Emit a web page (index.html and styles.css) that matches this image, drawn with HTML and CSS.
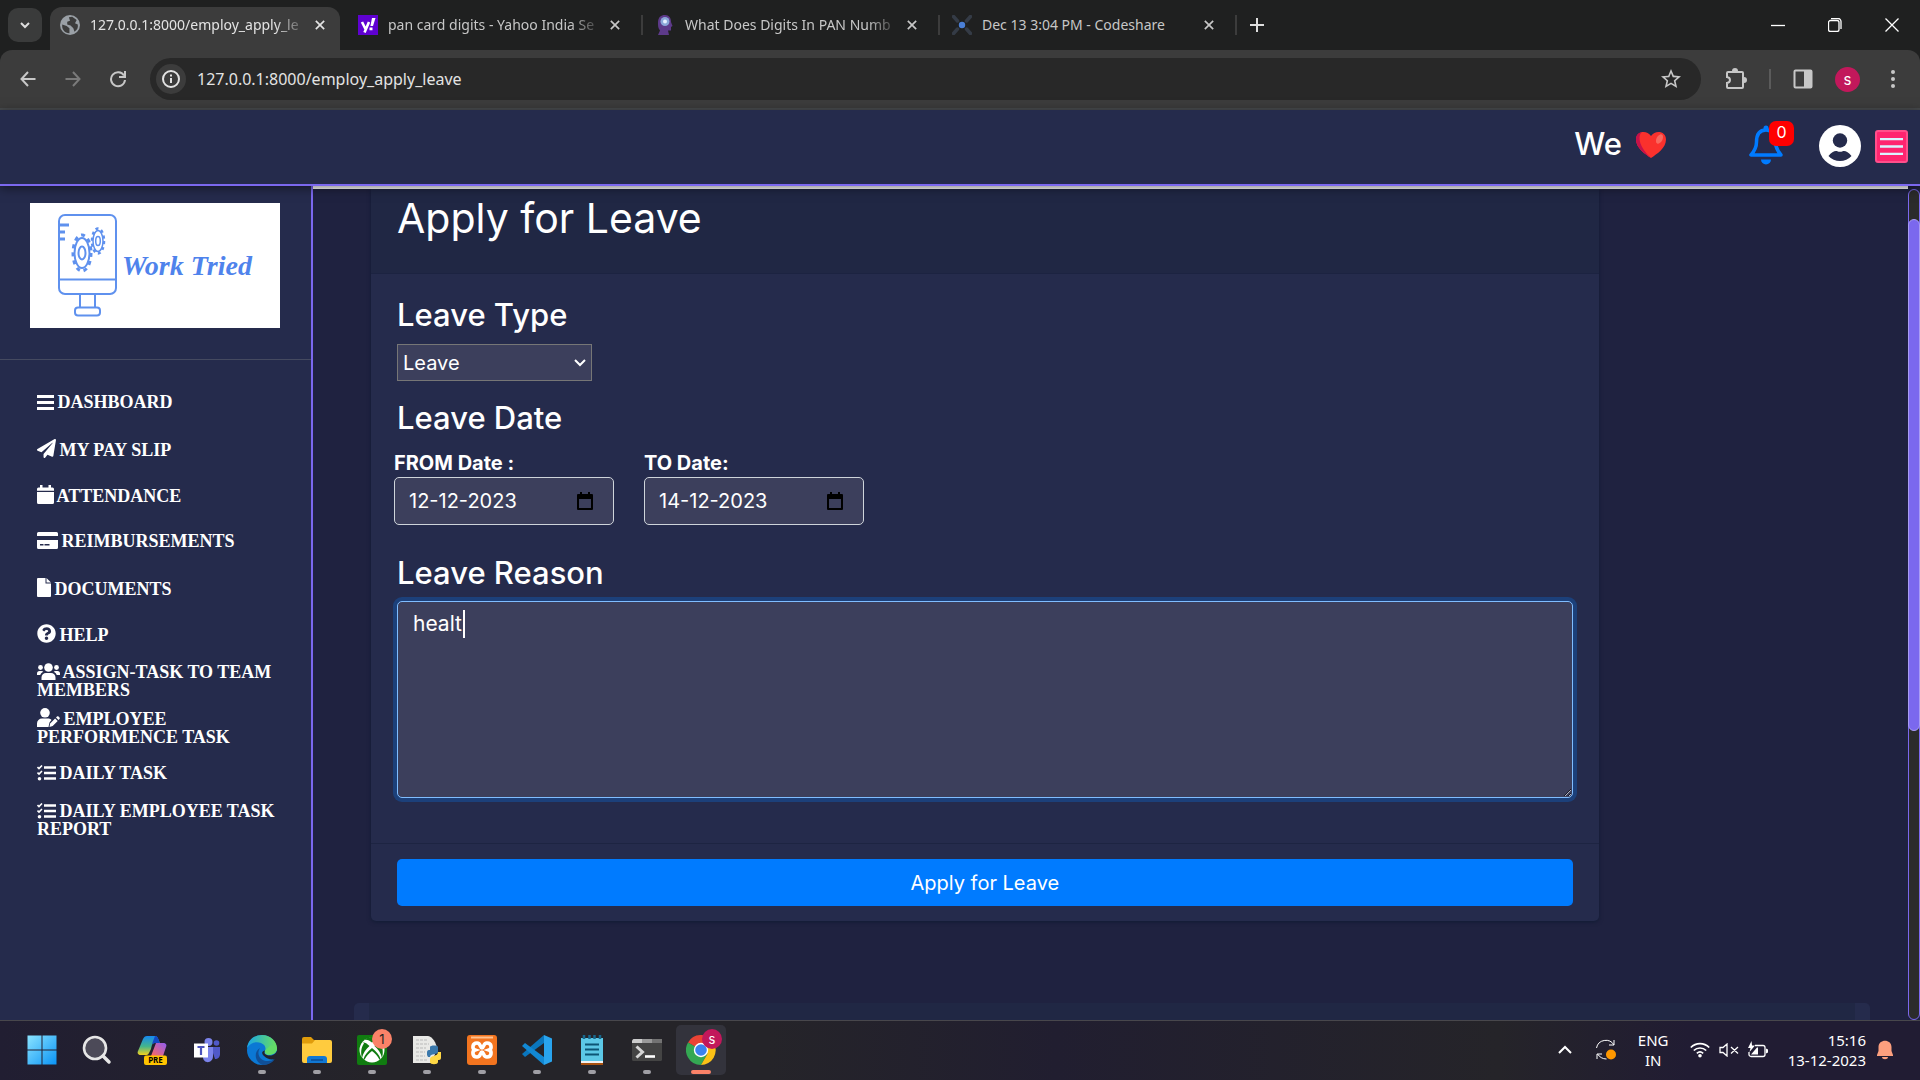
FILE: index.html
```html
<!DOCTYPE html>
<html lang="en">
<head>
<meta charset="utf-8">
<title>Apply for Leave</title>
<link rel="stylesheet" href="styles.css">
</head>
<body>
<header class="tabstrip">
  <button class="tab-search" aria-label="Search tabs"><svg width="12" height="8" viewBox="0 0 12 8"><path d="M2 2l4 4 4-4" class="line2"/></svg></button>
  <div class="tab tab-active">
    <svg class="favicon" viewBox="0 0 18 18"><circle cx="9" cy="9" r="9" fill="#9aa0a6"/><path d="M2 8.500l4 1.500 2.500 2v4.500C4 16 1.500 13 2 8.500zM8 2l3-.5 4 3-1.500 3 2.500 1c.5 3-.5 5-3 6.500l-1-3-2.500-2.500-3-1V6l2.500-.8z" fill="#3c3c3c"/></svg>
    <span class="tab-title tab-title-faded">127.0.0.1:8000/employ_apply_le</span>
    <button class="tab-close" aria-label="Close tab"><svg width="12" height="12" viewBox="0 0 12 12"><path d="M1 1l10 10M11 1L1 11" class="line2"/></svg></button>
  </div>
  <div class="tab">
    <svg class="favicon" viewBox="0 0 20 20"><path fill="#5f01d1" d="M0 0h20v20H0z"/><path d="M4 7l3.500 7M11 7l-4.500 10.500" stroke="#fff" stroke-width="2.600" fill="none"/><path d="M14 3h3.500l-2.500 8h-2.600zM11.500 12.500h3v2.800h-3z" fill="#fff"/></svg>
    <span class="tab-title tab-title-faded">pan card digits - Yahoo India Se</span>
    <button class="tab-close" aria-label="Close tab"><svg width="12" height="12" viewBox="0 0 12 12"><path d="M1 1l10 10M11 1L1 11" class="line2"/></svg></button>
  </div>
  <span class="tab-sep"></span>
  <div class="tab">
    <svg class="favicon" viewBox="0 0 20 20"><path d="M3 8C3 2 6 0 10 0s6 3 6 7l1.500 4-1.500 1v3.500h-3l1 4.500H3l2-4.500C3 13 3 11 3 8z" fill="#5d3a8a"/><circle cx="10" cy="6.500" r="4.500" fill="#8aa7d8"/><circle cx="10" cy="6.500" r="2" fill="#e5f0ff"/></svg>
    <span class="tab-title tab-title-faded">What Does Digits In PAN Numb</span>
    <button class="tab-close" aria-label="Close tab"><svg width="12" height="12" viewBox="0 0 12 12"><path d="M1 1l10 10M11 1L1 11" class="line2"/></svg></button>
  </div>
  <span class="tab-sep"></span>
  <div class="tab">
    <svg class="favicon" viewBox="0 0 20 20"><path d="M1.500 1.500l4 4.500M18.500 1.500l-4 4.500M1.500 18.500l4-4.500M18.500 18.500l-4-4.500" stroke="#343b46" stroke-width="3.500" stroke-linecap="round"/><circle cx="10" cy="10" r="3.200" fill="#4a7fd6"/></svg>
    <span class="tab-title">Dec 13 3:04 PM - Codeshare</span>
    <button class="tab-close" aria-label="Close tab"><svg width="12" height="12" viewBox="0 0 12 12"><path d="M1 1l10 10M11 1L1 11" class="line2"/></svg></button>
  </div>
  <span class="tab-sep"></span>
  <button class="tab-new" aria-label="New tab"><svg width="14" height="14" viewBox="0 0 14 14"><path d="M7 0v14M0 7h14" class="line2"/></svg></button>
  <div class="window-controls">
    <button aria-label="Minimize"><svg width="14" height="14" viewBox="0 0 14 14"><path d="M0 7.500h14" class="line1"/></svg></button>
    <button aria-label="Restore"><svg width="14" height="14" viewBox="0 0 14 14"><rect x=".5" y="2.500" width="10.500" height="11" rx="2" class="line1"/><path d="M3 .5h7a3 3 0 0 1 3 3V11" class="line1"/></svg></button>
    <button aria-label="Close"><svg width="14" height="14" viewBox="0 0 14 14"><path d="M.5.5l13 13M13.500.5l-13 13" class="line1"/></svg></button>
  </div>
</header>

<div class="toolbar-back">
<div class="toolbar">
  <button class="tool" aria-label="Back"><svg width="16" height="16" viewBox="0 0 16 16"><path d="M15.500 8H1.500M8 1L1.500 8 8 15" class="line2"/></svg></button>
  <button class="tool tool-dim" aria-label="Forward"><svg width="16" height="16" viewBox="0 0 16 16"><path d="M.5 8h14M8 1l6.500 7L8 15" class="line2"/></svg></button>
  <button class="tool" aria-label="Reload"><svg width="18" height="18" viewBox="0 0 18 18"><path d="M15 5.500A7 7 0 1 0 16 10M16 1v6h-6" class="line2"/></svg></button>
  <div class="omnibox">
    <span class="site-info"><svg width="18" height="18" viewBox="0 0 18 18"><circle cx="9" cy="9" r="8" class="line2"/><path d="M9 8v5M9 4.500v2" class="line2"/></svg></span>
    <input class="url" type="text" aria-label="Address" value="127.0.0.1:8000/employ_apply_leave">
    <button class="star" aria-label="Bookmark"><svg width="24" height="24" viewBox="0 0 24 24" fill="currentColor"><path d="M22 9.240l-7.190-.62L12 2 9.190 8.630 2 9.240l5.460 4.730L5.820 21 12 17.270 18.180 21l-1.630-7.030L22 9.240zM12 15.400l-3.760 2.270 1-4.280-3.320-2.880 4.380-.38L12 6.100l1.710 4.040 4.380.38-3.320 2.880 1 4.280L12 15.400z"/></svg></button>
  </div>
  <div class="tool-group">
    <button aria-label="Extensions"><svg width="22" height="22" viewBox="0 0 22 22"><path d="M3.500 4h13.500a1 1 0 0 1 1 1v14a1 1 0 0 1-1 1H3a1 1 0 0 1-1-1v-4c4-.5 4-5.500 0-6V5a1 1 0 0 1 1-1z" class="line2"/><path d="M7 3a3 3 0 0 1 6 0zM19 9a3 3 0 0 1 0 6z" fill="currentColor"/></svg></button>
    <span class="tool-sep"></span>
    <button aria-label="Side panel"><svg width="20" height="20" viewBox="0 0 20 20"><rect x="1.500" y="1.500" width="17" height="17" rx="1" class="line2"/><path d="M11 1h8v18h-8z" fill="currentColor"/></svg></button>
    <button class="profile" aria-label="Profile">s</button>
    <button aria-label="Menu"><svg width="6" height="20" viewBox="0 0 6 20" fill="currentColor"><circle cx="3" cy="3" r="2"/><circle cx="3" cy="10" r="2"/><circle cx="3" cy="17" r="2"/></svg></button>
  </div>
</div>
</div>

<div class="page">
  <header class="app-header">
    <span class="we">We</span>
    <svg class="heart" width="30" height="28" viewBox="0 0 30 28"><path d="M15 27C9 23 0 17 0 8.500 0 3.500 3.500 1 7.500 1c3 0 5.500 1.300 7.500 4 2-2.700 4.500-4 7.500-4C26.500 1 30 3.500 30 8.500 30 17 21 23 15 27z" fill="#fa312d"/><path d="M15 27C9 23 0 17 0 8.500 0 4 2.500 1.500 5.500 1.200 1 6 4 17 15 27z" fill="#c5114a"/><ellipse cx="23.500" cy="8" rx="3" ry="5" transform="rotate(28 23.500 8)" fill="#f8685f"/></svg>
    <a class="notify" href="#" aria-label="Notifications">
      <svg width="34" height="40" viewBox="0 0 34 40"><path d="M17 5C9 5 7.500 12 7.500 17c0 6-2 9-5.500 13h30c-3.500-4-5.500-7-5.500-13 0-5-1.500-12-9.500-12z" fill="none" stroke="#007bff" stroke-width="3.500" stroke-linejoin="round"/><path d="M14.500 5V3a2.500 2.500 0 0 1 5 0v2zM12 34.500h10a5 5 0 0 1-10 0z" fill="#007bff"/></svg>
      <span class="badge">0</span>
    </a>
    <svg class="avatar" width="42" height="42" viewBox="0 0 42 42"><circle cx="21" cy="21" r="21" fill="#fff"/><circle cx="21" cy="15.500" r="7.200" fill="#252b4c"/><path d="M9.500 31C12 27.500 15 26 17 26c1.500 0 2 .8 4 .8s2.500-.8 4-.8c2 0 5 1.500 7.500 5a15.500 15.500 0 0 1-23 0z" fill="#252b4c"/></svg>
    <button class="burger" aria-label="Toggle menu"><svg width="23" height="17" viewBox="0 0 23 17"><path d="M0 1h23M0 8.500h23M0 16h23" stroke="#d9f3ff" stroke-width="2.400"/></svg></button>
  </header>

  <div class="columns">
    <aside class="sidebar">
      <div class="logo">
        <svg width="60" height="106" viewBox="0 0 60 106" fill="none" stroke="#5f91ee" stroke-width="2">
          <rect x="1" y="2" width="57" height="79" rx="6"/><path d="M1 66.500h57M22 82v12M37 82v12"/><rect x="17" y="94.500" width="25" height="8" rx="3"/><path d="M2 12h9M2 19h5M2 26h5" stroke-width="3"/>
          <ellipse cx="24" cy="40" rx="9" ry="18" stroke-width="3" stroke-dasharray="4 4"/><ellipse cx="24" cy="40" rx="7.500" ry="15" fill="#fff"/><ellipse cx="24" cy="40" rx="3.500" ry="6.500"/>
          <ellipse cx="40" cy="28" rx="6" ry="12.500" stroke-width="2.500" stroke-dasharray="3 3"/><ellipse cx="40" cy="28" rx="5" ry="10.500" fill="#fff" stroke-width="1.500"/><ellipse cx="40" cy="28" rx="2.300" ry="4.500" stroke-width="1.500"/>
        </svg>
        <span class="logo-text">Work Tried</span>
      </div>
      <nav class="menu">
        <a href="#"><span><svg width="17" height="15" viewBox="0 0 17 15"><path d="M0 1.500h17M0 7.500h17M0 13.500h17" stroke="#fff" stroke-width="3"/></svg> DASHBOARD</span></a>
        <a href="#"><span><svg width="19" height="19" viewBox="0 0 512 512"><path d="M476 3.200L12.500 270.600c-18.100 10.400-15.800 35.600 2.200 43.200L121 358.400l287.300-253.200c5.500-4.900 13.300 2.600 8.600 8.300L176 407v80.500c0 23.600 28.500 32.900 42.500 15.800L282 426l124.600 52.200c14.200 6 30.400-2.900 33-18.200l72-432C515 7.800 493.300-6.800 476 3.200z"/></svg> MY PAY SLIP</span></a>
        <a href="#"><span><svg width="17" height="19" viewBox="0 0 17 19"><path d="M0 7h17v10.500a1.500 1.500 0 0 1-1.500 1.500h-14A1.500 1.500 0 0 1 0 17.500zM0 5.800V4a1.500 1.500 0 0 1 1.500-1.500H3V0h2.500v2.500h6V0H14v2.500h1.500A1.500 1.500 0 0 1 17 4v1.800z"/></svg> ATTENDANCE</span></a>
        <a href="#"><span><svg width="21" height="17" viewBox="0 0 21 17"><path d="M0 4V1.500A1.500 1.500 0 0 1 1.500 0h18A1.500 1.500 0 0 1 21 1.500V4zM0 8h21v7.500a1.500 1.500 0 0 1-1.500 1.500h-18A1.500 1.500 0 0 1 0 15.500zm3 4v1.500h3.500V12zm4.500 0v1.500h5V12z" fill-rule="evenodd"/></svg> REIMBURSEMENTS</span></a>
        <a href="#"><span><svg width="14" height="19" viewBox="0 0 14 19"><path d="M0 1a1 1 0 0 1 1-1h7.500v5.500H14V18a1 1 0 0 1-1 1H1a1 1 0 0 1-1-1zM9.500 0L14 4.500H9.500z"/></svg> DOCUMENTS</span></a>
        <a href="#"><span><svg width="19" height="19" viewBox="0 0 512 512"><path d="M504 256c0 136.997-111.043 248-248 248S8 392.997 8 256C8 119.083 119.043 8 256 8s248 111.083 248 248zM262.655 90c-54.497 0-89.255 22.957-116.549 63.758-3.536 5.286-2.353 12.415 2.715 16.258l34.699 26.310c5.205 3.947 12.621 3.008 16.665-2.122 17.864-22.658 30.113-35.797 57.303-35.797 20.429 0 45.698 13.148 45.698 32.958 0 14.976-12.363 22.667-32.534 33.976C247.128 238.528 216 254.941 216 296v4c0 6.627 5.373 12 12 12h56c6.627 0 12-5.373 12-12v-1.333c0-28.462 83.186-29.647 83.186-106.667 0-58.002-60.165-102-116.531-102zM256 338c-25.365 0-46 20.635-46 46 0 25.364 20.635 46 46 46s46-20.636 46-46c0-25.365-20.635-46-46-46z"/></svg> HELP</span></a>
        <a href="#"><span><svg width="23" height="17" viewBox="0 0 23 17"><circle cx="11.500" cy="4.500" r="4.300"/><circle cx="3.500" cy="4.500" r="2.400"/><circle cx="19.500" cy="4.500" r="2.400"/><path d="M4.500 17v-2.500a4.500 4.500 0 0 1 4.500-4.500h5a4.500 4.500 0 0 1 4.500 4.500V17zM0 12v-1.500A2.500 2.500 0 0 1 2.500 8h2c.8 0 1.300.2 1.800.7C4.500 9.500 3.500 11 3.300 12zM23 12v-1.500A2.500 2.500 0 0 0 20.500 8h-2c-.8 0-1.300.2-1.800.7 1.800.8 2.800 2.300 3 3.300z"/></svg> ASSIGN-TASK TO TEAM MEMBERS</span></a>
        <a href="#"><span><svg width="23" height="19" viewBox="0 0 23 19"><circle cx="8" cy="4.800" r="4.800"/><path d="M0 19v-3.500A5 5 0 0 1 5 10.500h6c1.500 0 2.700.5 3.500 1.500l-2 2.500-1 4.500zM12.500 19l.6-3.500 5-5 2.600 2.600-5 5zM19 9.500l1-1c.5-.5 1-.5 1.500 0l1 1c.5.500.5 1 0 1.500l-1 1z"/></svg> EMPLOYEE PERFORMENCE TASK</span></a>
        <a href="#"><span><svg width="19" height="16" viewBox="0 0 19 16"><path d="M7 2.500h12M7 8h12M7 13.500h12" stroke="#fff" stroke-width="2.500"/><path d="M.5 2l1.500 1.500L5 .5M.5 7.500L2 9l3-3" stroke="#fff" stroke-width="1.600" fill="none"/><circle cx="2.500" cy="13.700" r="1.800"/></svg> DAILY TASK</span></a>
        <a href="#"><span><svg width="19" height="16" viewBox="0 0 19 16"><path d="M7 2.500h12M7 8h12M7 13.500h12" stroke="#fff" stroke-width="2.500"/><path d="M.5 2l1.500 1.500L5 .5M.5 7.500L2 9l3-3" stroke="#fff" stroke-width="1.600" fill="none"/><circle cx="2.500" cy="13.700" r="1.800"/></svg> DAILY EMPLOYEE TASK REPORT</span></a>
      </nav>
    </aside>

    <main class="content">
      <form class="card">
        <h1 class="card-head">Apply for Leave</h1>
        <div class="card-body">
          <label class="field-title" for="type">Leave Type</label>
          <div class="select-wrap">
            <select id="type"><option>Leave</option></select>
            <svg class="select-arrow" width="12" height="8" viewBox="0 0 12 8"><path d="M1 1l5 5 5-5" class="line2"/></svg>
          </div>
          <h2 class="field-title">Leave Date</h2>
          <div class="dates">
            <div class="date"><label for="from">FROM Date :</label>
              <div class="date-box"><input id="from" type="text" value="12-12-2023"><svg width="16" height="18" viewBox="0 0 16 18"><path d="M0 3a1 1 0 0 1 1-1h2V0h2v2h6V0h2v2h2a1 1 0 0 1 1 1v14a1 1 0 0 1-1 1H1a1 1 0 0 1-1-1zm2 4v9h12V7z" fill-rule="evenodd"/></svg></div></div>
            <div class="date"><label for="to">TO Date:</label>
              <div class="date-box"><input id="to" type="text" value="14-12-2023"><svg width="16" height="18" viewBox="0 0 16 18"><path d="M0 3a1 1 0 0 1 1-1h2V0h2v2h6V0h2v2h2a1 1 0 0 1 1 1v14a1 1 0 0 1-1 1H1a1 1 0 0 1-1-1zm2 4v9h12V7z" fill-rule="evenodd"/></svg></div></div>
          </div>
          <label class="field-title" for="reason">Leave Reason</label>
          <div class="reason-wrap"><textarea id="reason">healt</textarea><span class="caret"></span></div>
        </div>
        <div class="card-foot"><button class="submit" type="submit">Apply for Leave</button></div>
      </form>
      <section class="history"><div class="history-head"></div></section>
    </main>
    <div class="scrollbar"><div class="thumb"></div></div>
  </div>
</div>

<footer class="taskbar">
  <div class="apps">
    <button class="app" aria-label="Start"><svg width="30" height="30" viewBox="0 0 30 30"><defs><linearGradient id="win" x2="1" y2="1"><stop stop-color="#8be4ff"/><stop offset="1" stop-color="#0a93f5"/></linearGradient></defs><path d="M.5.500h14v14h-14zM15.500.5h14v14h-14zM.5 15.500h14v14h-14zM15.500 15.500h14v14h-14z" fill="url(#win)"/></svg></button>
    <button class="app" aria-label="Search"><svg width="30" height="30" viewBox="0 0 30 30"><circle cx="13" cy="13" r="11" fill="#4c4a58" stroke="#e6e6e6" stroke-width="2.600"/><path d="M21 21l6 6" stroke="#e6e6e6" stroke-width="3.500" stroke-linecap="round"/></svg></button>
    <button class="app" aria-label="Copilot"><svg width="30" height="30" viewBox="0 0 30 30"><defs><linearGradient id="cop" x2="0" y2="1"><stop stop-color="#1689f0"/><stop offset=".55" stop-color="#44b58b"/><stop offset="1" stop-color="#f5d11d"/></linearGradient><linearGradient id="cop2" x1="1" x2="0" y2="1"><stop stop-color="#8f5cf2"/><stop offset="1" stop-color="#ff6a5c"/></linearGradient></defs><path d="M6 4c1-2 2-3 4-3h8c3 0 3 3 5 7h-5c-3 0-3 2-4 6l-2 4c-1 2-2 2-4 2H4c-3 0-4-2-3-4z" fill="url(#cop)"/><path d="M18 1c3 0 3 3 5 7h-5l-3 1z" fill="#1248c4"/><path d="M19 8h7c3 0 4 2 3 4l-3 9H14z" fill="url(#cop2)"/><rect x="7" y="20.500" width="23" height="9.500" rx="2" fill="#ffc400"/><text x="18.500" y="28.300" class="tiny-label">PRE</text></svg></button>
    <button class="app" aria-label="Teams"><svg width="28" height="26" viewBox="0 0 28 26"><circle cx="15.500" cy="5" r="4" fill="#7b83eb"/><circle cx="23.500" cy="6" r="2.800" fill="#5059c9"/><path d="M18 10h9v7c0 3-2 5-5 5z" fill="#5059c9"/><path d="M10 10h10v9c0 8-10 8-10 1z" fill="#7b83eb"/><path d="M1 6.500h14v14H1z" fill="#fff"/><path d="M4.500 10h7M8 10v8" stroke="#4b53bc" stroke-width="2.200"/></svg></button>
    <button class="app running" aria-label="Edge"><svg width="30" height="30" viewBox="0 0 30 30"><defs><linearGradient id="ed" x2="1"><stop stop-color="#18a4e8"/><stop offset="1" stop-color="#6ae05c"/></linearGradient></defs><circle cx="15" cy="15" r="15" fill="#0b78d4"/><path d="M0 13C1 5 7 0 15 0c9 0 15 7 15 13 0 5-4 7-8 7-4 0-5-2-4-4s1-6-4-8C9 6 3 8 0 13z" fill="url(#ed)"/><path d="M13 13c-4 6 0 13 8 13 3 0 5-1 7-2-3 4-7 6-12 6-8-2-10-13-3-17z" fill="#104f97"/><path d="M18 15.500c-1.500 2.500 0 5 5 5 3 0 6-1.500 7-5v5l-2 3.500c-4 1-8 0-11-3s-2-5 1-5.500z" fill="#23222c"/><path d="M18 15.500c-.5 2 1.500 4 5 4 4 0 7-3 7-6.500l-6-3z" fill="#62dc68"/></svg></button>
    <button class="app running" aria-label="File Explorer"><svg width="30" height="28" viewBox="0 0 30 28"><path d="M0 3a2 2 0 0 1 2-2h7l3 3h16v8H0z" fill="#e09c0b"/><path d="M0 7.500h10L13 4h15a2 2 0 0 1 2 2v19a2 2 0 0 1-2 2H2a2 2 0 0 1-2-2z" fill="#ffcb3e"/><path d="M5 27v-4a3 3 0 0 1 3-3h14a3 3 0 0 1 3 3v4z" fill="#1178d4"/><path d="M9 24h12" stroke="#0b4d96" stroke-width="1.500"/></svg></button>
    <button class="app running" aria-label="Xbox"><svg width="30" height="30" viewBox="0 0 30 30"><rect width="30" height="30" rx="2" fill="#107c10"/><circle cx="15" cy="15" r="12.500" fill="#fff"/><path d="M7 5c3-1 5.500.500 8 2.500C17.500 5.500 20 4 23 5 18 1 12 1 7 5zM5 23c1-5 4-9 7.500-12C9.500 8 7.500 7 6 7.500l1 1c-3 4-3.500 9-2 14.500zM25 23c-1-5-4-9-7.500-12 3-3 5-4 6.500-3.500l-1 1c3 4 3.500 9 2 14.500z" fill="#107c10"/><path d="M15 13c-4 3-7.500 7-8.500 11l1 .8C9.500 21 12 18 15 16c3 2 5.500 5 7.500 8.800l1-.8c-1-4-4.500-8-8.500-11z" fill="#107c10"/></svg><span class="app-badge">1</span></button>
    <button class="app running" aria-label="Python"><svg width="28" height="30" viewBox="0 0 28 30"><path d="M0 1h15c5 1 8 7 9 12l-5 15H0z" fill="#e9e9e6"/><path d="M3 5h11M3 9h13M3 13h10M3 17h9M3 21h9M3 25h11" stroke="#b9b9b9" stroke-dasharray="3 1"/><path d="M14 20v-2c0-3 1-3 3-3v-3c0-2 8-2 8 0v5c0 3-8 1-8 5h-2z" fill="#3a78ab"/><path d="M28 17v6c0 2-2 2-3 2v2c0 3-8 3-8 0v-3c0-4 8-2 8-7z" fill="#ffd845"/></svg></button>
    <button class="app running" aria-label="XAMPP"><svg width="30" height="30" viewBox="0 0 30 30"><rect width="30" height="30" rx="3" fill="#f2741f"/><path d="M4 2.500h22" stroke="#ffc18f" stroke-width="2"/><path d="M10 8c-5 0-5 6-2 7-3 1-3 7 2 7 4 0 3-5 5-5s1 5 5 5c5 0 5-6 2-7 3-1 3-7-2-7-4 0-3 5-5 5s-1-5-5-5z" fill="none" stroke="#fff" stroke-width="3.600"/></svg></button>
    <button class="app running" aria-label="Visual Studio Code"><svg width="30" height="30" viewBox="0 0 30 30"><path d="M22 0L0 19l3 3L22 8z" fill="#0a76bd"/><path d="M3 8L0 11l22 19v-8z" fill="#1288d3"/><path d="M22 0l8 3.500v23L22 30z" fill="#29a4ee"/></svg></button>
    <button class="app running" aria-label="Notepad"><svg width="24" height="30" viewBox="0 0 24 30"><path d="M1 3h22v24H1z" fill="#5cc8e6"/><path d="M1 26h22v2H1z" fill="#f1f1f1"/><path d="M1 28h22v2H1z" fill="#a9510e"/><path d="M5 9.500h14M5 14.500h14M5 19.500h14" stroke="#0c5575" stroke-width="2"/><path d="M4 0v4M9.500 0v4M14.500 0v4M20 0v4" stroke="#17678c" stroke-width="2.500"/></svg></button>
    <button class="app running" aria-label="Terminal"><svg width="30" height="22" viewBox="0 0 30 22"><rect width="30" height="22" rx="1.500" fill="#444"/><path d="M0 4V1.500L1.500 0H10v4z" fill="#ccc"/><path d="M10 0h10v4H10z" fill="#9a9a9a"/><path d="M20 0h10v4H20z" fill="#737373"/><path d="M4.500 7.500L10.500 13l-6 5.500" stroke="#d6d6d6" stroke-width="3" fill="none"/><path d="M13 17.500h10" stroke="#fff" stroke-width="2.600"/></svg></button>
    <button class="app running current" aria-label="Chrome"><svg width="30" height="30" viewBox="0 0 30 30"><path d="M15 15L2 7.500A15 15 0 0 1 28 7.500L28 8z" fill="#ea4335"/><path d="M15 15L2 7.500A15 15 0 0 0 15 30l6.500-11.500z" fill="#34a853"/><path d="M15 8h13a15 15 0 0 1-13 22l6.500-11.200z" fill="#fbc116"/><circle cx="15" cy="15" r="7.200" fill="#fff"/><circle cx="15" cy="15" r="5.800" fill="#3b82f0"/></svg><span class="app-badge profile-badge">s</span></button>
  </div>
  <div class="tray">
    <svg width="14" height="9" viewBox="0 0 14 9"><path d="M1 8l6-6 6 6" class="line2"/></svg>
    <svg class="sync" width="22" height="22" viewBox="0 0 22 22"><path d="M1.500 9a9.500 9.500 0 0 1 17.500-3V1M19 6h-5M2 20v-5h5M2.500 15c2 3 5 5 9 5" class="line1"/><circle cx="16" cy="15.500" r="5" fill="#ff9800"/></svg>
    <div class="lang"><span>ENG</span><span>IN</span></div>
    <div class="status">
    <svg width="20" height="16" viewBox="0 0 20 16"><path d="M.8 5.500a13 13 0 0 1 18.400 0M3.800 8.500a9 9 0 0 1 12.400 0M6.800 11.300a5 5 0 0 1 6.400 0" fill="none" stroke="#fff" stroke-width="1.700"/><circle cx="10" cy="13.700" r="1.800" fill="#fff"/></svg>
    <svg width="20" height="14" viewBox="0 0 20 14"><path d="M1 4.500h3L8 1v12L4 9.500H1zM12 4l7 6.500M19 4l-7 6.500" class="line1"/></svg>
    <svg width="20" height="18" viewBox="0 0 20 18"><path d="M7 4.500h8a2 2 0 0 1 2 2v7a2 2 0 0 1-2 2H3a2 2 0 0 1-2-2V11" class="line1"/><path d="M18 7.500l2 1v3l-2 1zM3 13.500L9 6.500h1v7zM3.500 0L0 7h2.500L1.500 11 7 4.500H4z" fill="#fff"/></svg>
    </div>
    <div class="clock"><span>15:16</span><span>13-12-2023</span></div>
    <svg width="16" height="20" viewBox="0 0 16 20"><path d="M0 15l1.500-4V7C1.500-1.500 14.500-1.500 14.500 7v4l1.500 4v1H0zM5 17h6c0 3-6 3-6 0z" fill="#fc9f7e"/></svg>
  </div>
</footer>
</body>
</html>
```
FILE: styles.css
```css
* { box-sizing: border-box; }

body {
  margin: 0;
  height: 100vh;
  display: flex;
  flex-direction: column;
  overflow: hidden;
  background: #1f2240;
  color: #fff;
  font-family: Inter, "Noto Sans", sans-serif;
}

button {
  border: 0;
  padding: 0;
  background: none;
  color: inherit;
  font: inherit;
  display: flex;
  align-items: center;
  justify-content: center;
}

h1, h2 { margin: 0; }

svg { flex: none; }

.line1, .line2 { fill: none; stroke: currentColor; stroke-width: 1; }
.line2 { stroke-width: 2; }
.window-controls .line1, .status .line1 { stroke-width: 1.300; }

/* Browser chrome */
.tabstrip {
  flex: none;
  height: 50px;
  display: flex;
  align-items: center;
  background: #1f2020;
  color: #dedede;
  font: 14px "Noto Sans", sans-serif;
}

.tab-search {
  width: 34px;
  height: 34px;
  margin: 0 8px;
  border-radius: 10px;
  background: #3a3b3b;
}

.tab {
  align-self: flex-end;
  width: 295px;
  height: 43px;
  padding: 0 20px 8px 12px;
  display: flex;
  align-items: center;
  gap: 10px;
  color: #c7c7c7;
}

.tab-active {
  width: 290px;
  margin-right: 6px;
  padding: 0 14px 8px 10px;
  border-radius: 12px 12px 0 0;
  background: #3c3c3c;
  color: #e3e3e3;
}

.tab-sep { width: 2px; height: 20px; background: #3c3c3c; }

.favicon { width: 20px; height: 20px; }

.tab-title { flex: 1; min-width: 0; white-space: nowrap; }
.tab-title-faded { mask-image: linear-gradient(to right, #000 88%, transparent 104%); }

.tab-close { width: 12px; margin-left: 4px; }
.tab-close svg { width: 10px; }

.tab-new { width: 40px; }

.window-controls { margin-left: auto; display: flex; color: #fff; }
.window-controls button { width: 57px; height: 50px; }

.toolbar-back { flex: none; background: #1f2020; }

.toolbar {
  height: 60px;
  padding: 0 24px 0 5px;
  display: flex;
  align-items: center;
  border-bottom: 2px solid #484b4e;
  border-radius: 12px 12px 0 0;
  background: #3c3c3c;
  color: #c7c7c7;
}

.tool { width: 45px; height: 40px; }
.tool-dim { color: #7a7a7a; }

.omnibox {
  flex: 1;
  height: 42px;
  margin-left: 10px;
  padding: 0 18px 0 6px;
  display: flex;
  align-items: center;
  gap: 11px;
  border-radius: 21px;
  background: #282828;
}

.site-info {
  width: 30px;
  height: 30px;
  display: flex;
  align-items: center;
  justify-content: center;
  border-radius: 50%;
  background: #3c3c3c;
  color: #e3e3e3;
}

.url {
  flex: 1;
  padding: 0;
  border: 0;
  outline: 0;
  background: none;
  color: #e3e3e3;
  font: 16px "Noto Sans", sans-serif;
}

.tool-group { margin-left: 24px; display: flex; align-items: center; gap: 22px; }
.tool-sep { width: 2px; height: 20px; background: #5b5b5b; }
.profile {
  width: 25px;
  height: 25px;
  border-radius: 50%;
  background: #c2185b;
  color: #fff;
  font-size: 15px;
}
.tool-group .profile + button { margin-left: 8px; }

/* Application */
.page { flex: 1; min-height: 0; display: flex; flex-direction: column; }

.app-header {
  flex: none;
  height: 76px;
  padding: 0 12px 2px 0;
  display: flex;
  align-items: center;
  justify-content: flex-end;
  border-bottom: 2px solid #7b68ee;
  background: #252b4c;
  box-shadow: 0 2px 10px rgba(0, 0, 0, .5);
  position: relative;
}

.we { margin: 0 14px 6px 0; font-size: 31px; font-weight: 500; }
.heart { margin: 0 83px 2px 0; }
.notify { display: flex; margin: 0 36px 2px 0; position: relative; }
.badge {
  position: absolute;
  left: 20px;
  top: -4px;
  width: 25px;
  height: 25px;
  border-radius: 7px;
  background: #f00;
  color: #fff;
  font-size: 16px;
  line-height: 22px;
  text-align: center;
}
.avatar { margin-right: 14px; }
.burger {
  width: 33px;
  height: 33px;
  border: 2px solid #ff4f8b;
  border-radius: 3px;
  background: #ff246f;
}

.columns { flex: 1; min-height: 0; display: flex; }

.sidebar {
  flex: none;
  width: 313px;
  border-right: 2px solid #7b68ee;
  background: #252b4c;
}

.logo {
  height: 125px;
  margin: 17px 31px 31px 30px;
  padding: 0 28px;
  display: flex;
  align-items: center;
  gap: 4px;
  background: #fff;
}

.logo-text {
  color: #4f83ec;
  font: italic bold 28px "Liberation Serif", serif;
  white-space: nowrap;
}

.menu {
  height: 484px;
  padding: 19px 30px 0 37px;
  display: grid;
  grid-auto-rows: 1fr;
  border-top: 1px solid #454a60;
}

.menu a {
  display: flex;
  align-items: center;
  color: #fff;
  font: bold 18px/18px "Liberation Serif", serif;
  text-decoration: none;
}

.menu svg { margin-right: -1px; fill: #fff; vertical-align: -2px; }

.content {
  flex: 1;
  min-width: 0;
  padding-left: 41px;
  border-top: 3px solid #fff;
  overflow: hidden;
}

.card {
  width: 79%;
  margin-left: 17px;
  border-radius: 0 0 5px 5px;
  background: #252b4c;
  box-shadow: 0 1px 4px rgba(0, 20, 40, .5);
}

.card-head {
  height: 85px;
  padding: 4px 26px;
  border-bottom: 1px solid #1c2341;
  background: #202744;
  font-size: 41px;
  font-weight: 400;
  line-height: 50px;
}

.card-body { padding: 23px 26px 45px; }

.field-title {
  display: block;
  font-size: 31px;
  font-weight: 500;
  line-height: 36px;
}

.select-wrap { position: relative; width: 195px; margin: 11px 0 19px; }
.select-wrap select {
  appearance: none;
  display: block;
  width: 100%;
  height: 37px;
  padding: 0 5px;
  border: 1px solid #767676;
  border-radius: 0;
  background: #3c3f5c;
  color: #fff;
  font: 20px Inter, sans-serif;
}
.select-arrow { position: absolute; right: 6px; top: 15px; }

.dates { display: flex; gap: 30px; margin: 13px 0 30px -3px; }
.date label { display: block; font-size: 20px; font-weight: 700; line-height: 28px; }
.date-box {
  width: 220px;
  height: 48px;
  padding: 0 20px 0 14px;
  display: flex;
  align-items: center;
  border: 1px solid #ced4da;
  border-radius: 5px;
  background: #3c3f5c;
}
.date-box input {
  flex: 1;
  min-width: 0;
  padding: 0;
  border: 0;
  background: none;
  color: #fff;
  font: 20px Inter, sans-serif;
}

.reason-wrap { position: relative; margin-top: 10px; }
.reason-wrap textarea {
  display: block;
  width: 100%;
  height: 197px;
  padding: 7px 15px;
  border: 1px solid #80bdff;
  border-radius: 5px;
  outline: 0;
  background: #3c3f5c;
  box-shadow: 0 0 0 4px #1c407a;
  color: #fff;
  font: 21px/30px Inter, sans-serif;
}
.caret { position: absolute; left: 66px; top: 9px; width: 2px; height: 28px; background: #fff; }

.card-foot { padding: 15px 26px; border-top: 1px solid #1d2442; }
.submit {
  width: 100%;
  height: 47px;
  border-radius: 5px;
  background: #007bff;
  font-size: 20px;
}

.history {
  height: 120px;
  margin: 82px 38px 0 0;
  padding: 0 15px;
  border-radius: 5px;
  background: #252b4c;
}
.history-head { height: 60px; background: #202744; }

.scrollbar {
  flex: none;
  width: 12px;
  margin-top: 3px;
  padding-top: 29px;
  border: 1px solid #7b68ee;
  border-radius: 6px;
  background: #2b2b2b;
}
.thumb {
  height: 64%;
  margin: 0 -1px;
  border: 1px solid #a99cf5;
  border-radius: 6px;
  background: #7b68ee;
}

/* Taskbar */
.taskbar {
  flex: none;
  height: 60px;
  padding: 0 27px 2px 14px;
  display: flex;
  align-items: center;
  justify-content: space-between;
  border-top: 1px solid #48474c;
  background: linear-gradient(to right, #211e32, #252429 20%, #252429 40%, #211e30 55%, #252429 78%, #211c33 88%);
  position: relative;
}

.apps { display: flex; }
.app { width: 55px; height: 50px; position: relative; }
.running::after {
  content: "";
  position: absolute;
  bottom: 1px;
  left: 24px;
  width: 8px;
  height: 4px;
  border-radius: 2px;
  background: #a09fa5;
}
.current { width: 50px; margin-left: 2px; border-radius: 5px; background: #33333c; }
.current::after { left: 15px; width: 20px; background: #fa8268; }
.app-badge {
  position: absolute;
  right: 7px;
  top: 4px;
  width: 20px;
  height: 20px;
  border-radius: 50%;
  background: #fa8268;
  color: #222;
  font-size: 13px;
  line-height: 20px;
}
.profile-badge { right: 4px; background: #c2185b; color: #fff; }
.tiny-label { font: bold 8px "Noto Sans", sans-serif; text-anchor: middle; }

.tray { display: flex; align-items: center; font: 15px/20px "Noto Sans", sans-serif; }
.sync { margin: 0 22px 0 23px; }
.lang, .clock { display: flex; flex-direction: column; }
.lang { width: 29px; margin-right: 22px; align-items: center; }
.status { display: flex; align-items: center; gap: 9px; }
.clock { margin: 0 11px 0 20px; align-items: flex-end; }
```
